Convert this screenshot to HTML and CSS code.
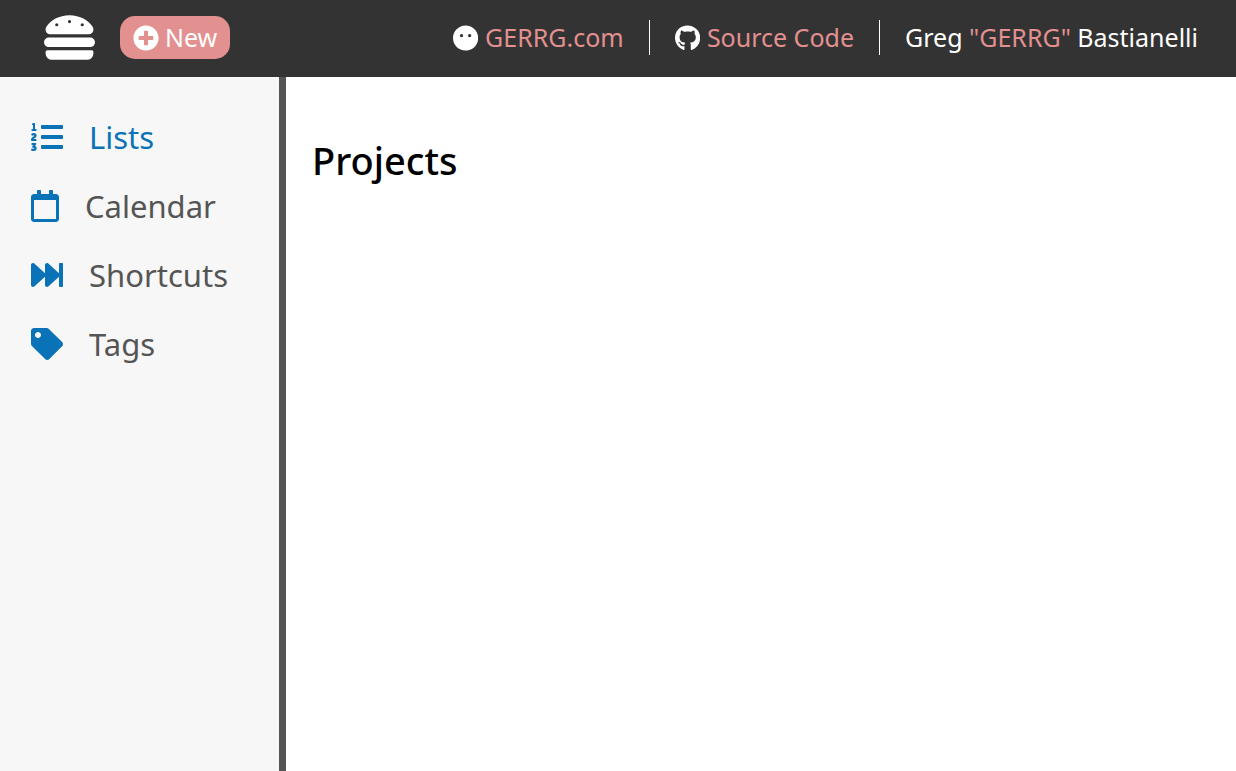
FILE: index.html
```html
<!DOCTYPE html>
<html lang="en">
<head>
<meta charset="utf-8">
<title>Projects</title>
<link rel="stylesheet" href="styles.css">
</head>
<body>
<header class="topbar">
  <div class="topbar-left">
    <svg class="logo" viewBox="0 0 512 512" aria-hidden="true"><path d="M464 256H48a48 48 0 0 0 0 96h416a48 48 0 0 0 0-96zm16 128H32a16 16 0 0 0-16 16v16a64 64 0 0 0 64 64h352a64 64 0 0 0 64-64v-16a16 16 0 0 0-16-16zM58.64 224h394.72c34.57 0 54.62-43.9 34.82-75.88C448 83.2 359.55 32.1 256 32c-103.54.1-192 51.2-232.18 116.11C4 180.09 24.07 224 58.64 224zM384 112a16 16 0 1 1-16 16 16 16 0 0 1 16-16zM256 80a16 16 0 1 1-16 16 16 16 0 0 1 16-16zm-128 32a16 16 0 1 1-16 16 16 16 0 0 1 16-16z"/></svg>
    <button class="new-button" type="button">
      <svg class="icon" viewBox="0 0 512 512" aria-hidden="true"><path d="M256 8C119 8 8 119 8 256s111 248 248 248 248-111 248-248S393 8 256 8zm144 276c0 6.6-5.4 12-12 12h-92v92c0 6.6-5.4 12-12 12h-56c-6.6 0-12-5.4-12-12v-92h-92c-6.6 0-12-5.4-12-12v-56c0-6.6 5.4-12 12-12h92v-92c0-6.6 5.4-12 12-12h56c6.6 0 12 5.4 12 12v92h92c6.6 0 12 5.4 12 12v56z"/></svg>
      <span>New</span>
    </button>
  </div>
  <div class="topbar-right">
    <a class="top-link" href="#">
      <svg class="icon" viewBox="0 0 496 512" aria-hidden="true"><path d="M248 8C111 8 0 119 0 256s111 248 248 248 248-111 248-248S385 8 248 8zm-80 232c-17.7 0-32-14.3-32-32s14.3-32 32-32 32 14.3 32 32-14.3 32-32 32zm160 0c-17.7 0-32-14.3-32-32s14.3-32 32-32 32 14.3 32 32-14.3 32-32 32z"/></svg>
      <span>GERRG.com</span>
    </a>
    <a class="top-link" href="#">
      <svg class="icon" viewBox="0 0 496 512" aria-hidden="true"><path d="M165.9 397.4c0 2-2.3 3.6-5.2 3.6-3.3.3-5.6-1.3-5.6-3.6 0-2 2.3-3.6 5.2-3.6 3-.3 5.6 1.3 5.6 3.6zm-31.1-4.5c-.7 2 1.3 4.3 4.3 4.9 2.6 1 5.6 0 6.2-2s-1.3-4.3-4.3-5.2c-2.6-.7-5.5.3-6.2 2.3zm44.2-1.7c-2.9.7-4.9 2.6-4.6 4.9.3 2 2.9 3.3 5.9 2.6 2.9-.7 4.9-2.6 4.6-4.6-.3-1.9-3-3.2-5.9-2.9zM244.8 8C106.1 8 0 113.3 0 252c0 110.9 69.8 205.8 169.5 239.2 12.8 2.3 17.3-5.6 17.3-12.1 0-6.2-.3-40.4-.3-61.4 0 0-70 15-84.7-29.8 0 0-11.4-29.1-27.8-36.6 0 0-22.9-15.7 1.6-15.4 0 0 24.9 2 38.6 25.8 21.9 38.6 58.6 27.5 72.9 20.9 2.3-16 8.8-27.1 16-33.7-55.9-6.2-112.3-14.3-112.3-110.5 0-27.5 7.6-41.3 23.6-58.9-2.6-6.5-11.1-33.3 2.6-67.9 20.9-6.5 69 27 69 27 20-5.6 41.5-8.5 62.8-8.5s42.8 2.9 62.8 8.5c0 0 48.1-33.6 69-27 13.7 34.7 5.2 61.4 2.6 67.9 16 17.7 25.8 31.5 25.8 58.9 0 96.5-58.9 104.2-114.8 110.5 9.2 7.9 17 22.9 17 46.4 0 33.7-.3 75.4-.3 83.6 0 6.5 4.6 14.4 17.3 12.1C428.2 457.8 496 362.9 496 252 496 113.3 383.5 8 244.8 8z"/></svg>
      <span>Source Code</span>
    </a>
    <div class="author">Greg <span class="accent">"GERRG"</span> Bastianelli</div>
  </div>
</header>
<div class="layout">
  <nav class="sidebar">
    <a class="side-link active" href="#">
      <svg class="side-icon" viewBox="0 0 512 512" aria-hidden="true"><path d="M61.77 401l17.5-20.15a19.92 19.92 0 0 0 5.07-14.19v-3.31C84.34 356 80.5 352 73 352H16a8 8 0 0 0-8 8v16a8 8 0 0 0 8 8h22.83a157.41 157.41 0 0 0-11 12.31l-5.61 7c-4 5.07-5.25 10.13-2.8 14.88l1.05 1.93c3 5.76 6.29 7.88 12.25 7.88h4.73c10.33 0 15.94 2.44 15.94 9.09 0 4.72-4.2 8.22-14.36 8.22a41.54 41.54 0 0 1-15.47-3.12c-6.49-3.88-11.74-3.5-15.6 3.12l-5.59 9.31c-3.72 6.13-3.19 11.72 2.63 15.94 7.71 4.69 20.38 9.44 37 9.44 34.16 0 48.5-22.75 48.5-44.12-.03-14.38-9.12-29.76-28.73-34.88zM496 224H176a16 16 0 0 0-16 16v32a16 16 0 0 0 16 16h320a16 16 0 0 0 16-16v-32a16 16 0 0 0-16-16zm0-160H176a16 16 0 0 0-16 16v32a16 16 0 0 0 16 16h320a16 16 0 0 0 16-16V80a16 16 0 0 0-16-16zm0 320H176a16 16 0 0 0-16 16v32a16 16 0 0 0 16 16h320a16 16 0 0 0 16-16v-32a16 16 0 0 0-16-16zM16 160h64a8 8 0 0 0 8-8v-16a8 8 0 0 0-8-8H64V40a8 8 0 0 0-8-8H32a8 8 0 0 0-7.14 4.42l-8 16A8 8 0 0 0 24 64h8v64H16a8 8 0 0 0-8 8v16a8 8 0 0 0 8 8zm-3.91 160H80a8 8 0 0 0 8-8v-16a8 8 0 0 0-8-8H41.32c3.29-10.29 48.34-18.68 48.34-56.44 0-29.06-25-39.56-44.47-39.56-21.36 0-33.8 10-40.46 18.75-4.37 5.59-3 10.84 2.8 15.37l8.58 6.88c5.61 4.56 11 2.47 16.12-2.44a13.44 13.44 0 0 1 9.46-3.84c3.33 0 9.28 1.56 9.28 8.75C51 248.19 0 257.31 0 304.59v4C0 316 5.08 320 12.09 320z"/></svg>
      <span>Lists</span>
    </a>
    <a class="side-link" href="#">
      <svg class="side-icon" viewBox="0 0 448 512" aria-hidden="true"><path d="M400 64h-48V12c0-6.6-5.4-12-12-12h-40c-6.6 0-12 5.4-12 12v52H160V12c0-6.6-5.4-12-12-12h-40c-6.6 0-12 5.4-12 12v52H48C21.5 64 0 85.5 0 112v352c0 26.5 21.5 48 48 48h352c26.5 0 48-21.5 48-48V112c0-26.5-21.5-48-48-48zm-6 400H54c-3.3 0-6-2.7-6-6V160h352v298c0 3.3-2.7 6-6 6z"/></svg>
      <span>Calendar</span>
    </a>
    <a class="side-link" href="#">
      <svg class="side-icon" viewBox="0 0 512 512" aria-hidden="true"><path d="M512 76v360c0 6.6-5.4 12-12 12h-40c-6.6 0-12-5.4-12-12V284.1L276.5 440.6c-20.6 17.2-52.5 2.8-52.5-24.6V284.1L52.5 440.6C31.9 457.8 0 443.4 0 416V96c0-27.4 31.9-41.7 52.5-24.6L224 226.8V96c0-27.4 31.9-41.7 52.5-24.6L448 226.8V76c0-6.6 5.4-12 12-12h40c6.6 0 12 5.4 12 12z"/></svg>
      <span>Shortcuts</span>
    </a>
    <a class="side-link" href="#">
      <svg class="side-icon" viewBox="0 0 512 512" aria-hidden="true"><path d="M0 252.118V48C0 21.49 21.49 0 48 0h204.118a48 48 0 0 1 33.941 14.059l211.882 211.882c18.745 18.745 18.745 49.137 0 67.882L293.823 497.941c-18.745 18.745-49.137 18.745-67.882 0L14.059 286.059A48 48 0 0 1 0 252.118zM112 64c-26.51 0-48 21.49-48 48s21.49 48 48 48 48-21.49 48-48-21.49-48-48-48z"/></svg>
      <span>Tags</span>
    </a>
  </nav>
  <main class="content">
    <h1 class="title">Projects</h1>
  </main>
</div>
</body>
</html>
```
FILE: styles.css
```css
* {
  box-sizing: border-box;
}

body {
  display: flex;
  flex-direction: column;
  min-height: 100vh;
  margin: 0;
  background: #fff;
  color: #000;
  font-family: "Noto Sans", "Open Sans", sans-serif;
}

svg {
  display: block;
  flex: none;
  fill: currentColor;
}

a {
  text-decoration: none;
}

.topbar {
  display: flex;
  align-items: center;
  justify-content: space-between;
  padding: 12px 38px 14px 44px;
  background: #333;
  color: #fff;
  font-size: 25px;
  line-height: 35px;
}

.topbar-left {
  display: flex;
  align-items: center;
  gap: 25px;
}

.logo {
  width: 51px;
  height: 51px;
}

.new-button {
  display: flex;
  align-items: center;
  gap: 6px;
  padding: 4px 13px;
  border: 0;
  border-radius: 15px;
  background: #e29090;
  color: #fff;
  font: inherit;
}

.icon {
  height: 26px;
  color: #fff;
}

.topbar-right {
  display: flex;
  align-items: center;
}

.top-link {
  display: flex;
  align-items: center;
  gap: 7px;
  margin-right: 25px;
  padding-right: 25px;
  border-right: 1px solid #fff;
  color: #e29090;
}

.accent {
  color: #e29090;
}

.layout {
  display: flex;
  flex: 1;
}

.sidebar {
  display: flex;
  flex: none;
  flex-direction: column;
  gap: 25px;
  width: 286px;
  padding: 38px 31px;
  border-right: 7px solid #555;
  background: #f7f7f7;
}

.side-link {
  display: flex;
  align-items: center;
  gap: 26px;
  color: #555;
  font-size: 31px;
  line-height: 44px;
}

.side-link.active {
  color: #0a73b7;
}

.side-icon {
  height: 32px;
  color: #0a73b7;
}

.content {
  flex: 1;
  padding: 58px 26px;
}

.title {
  margin: 0;
  font-size: 38px;
  font-weight: 500;
  line-height: 50px;
}
```
